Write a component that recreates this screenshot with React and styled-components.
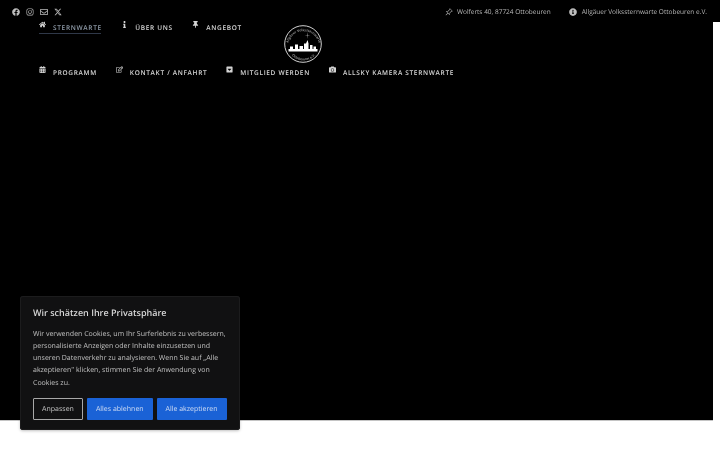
import React from "react";
import styled, { createGlobalStyle } from "styled-components";
import {
  FaHome,
  FaInfo,
  FaThumbtack,
  FaCalendarAlt,
  FaRegEdit,
  FaCamera,
  FaFacebook,
  FaInstagram,
  FaRegEnvelope,
  FaInfoCircle,
  FaCaretSquareDown,
} from "react-icons/fa";
import { FaXTwitter } from "react-icons/fa6";
import { BsPinAngle } from "react-icons/bs";

const GlobalStyle = createGlobalStyle`
  html, body {
    margin: 0;
    padding: 0;
    background: #fff;
    overflow: hidden;
  }
  * {
    box-sizing: border-box;
  }
`;

const Page = styled.div`
  position: relative;
  width: 720px;
  height: 450px;
  font-family: "Open Sans", "Liberation Sans", sans-serif;
  text-rendering: geometricPrecision;
  color: #fff;
  will-change: transform;
`;

const TopBar = styled.header`
  height: 22px;
  background: #000;
  display: flex;
  justify-content: space-between;
  align-items: center;
  padding: 1px 13px 0 12px;
`;

const Socials = styled.div`
  display: flex;
  align-items: center;
  gap: 6px;
  font-size: 8px;
  color: #bdbdbd;
`;

const InfoGroup = styled.div`
  display: flex;
  align-items: center;
  gap: 18.5px;
`;

const InfoItem = styled.span`
  display: flex;
  align-items: center;
  gap: 4.5px;
  font-size: 6.5px;
  color: #b8b8b8;

  svg {
    font-size: 8px;
    color: #bdbdbd;
  }
`;

const Hero = styled.main`
  width: 713px;
  height: 399px;
  background: #000;
  border-bottom: 1px solid #c4c4c4;
  padding: 0 0 0 39px;
`;

const Row = styled.nav`
  display: flex;
  height: 45px;
  gap: ${(props) => props.$gap}px;
`;

const NavEntry = styled.div`
  display: flex;
  flex-direction: column;
`;

const NavItem = styled.a`
  display: flex;
  align-items: flex-start;
  gap: 7px;
  height: 11px;
  font-size: 6.5px;
  font-weight: 600;
  letter-spacing: 0.68px;
  color: ${(props) => (props.$active ? "#8d99a6" : "#d4d4d4")};
  white-space: nowrap;

  svg {
    font-size: 7px;
    color: #d4d4d4;
    margin-top: -1px;
  }
`;

const NavLabel = styled.span`
  line-height: 11px;
`;

const ActiveLine = styled.span`
  display: block;
  width: 62px;
  height: 1px;
  background: #2f3848;
`;

const Logo = styled.svg`
  position: absolute;
  left: 284px;
  top: 25px;
  width: 39px;
  height: 39px;
`;

const LogoLettering = styled.text`
  font-size: 3.4px;
  font-weight: 600;
  fill: #a8a8a8;
  text-anchor: middle;
`;

const CookieBox = styled.section`
  position: absolute;
  left: 20px;
  top: 296px;
  width: 220px;
  height: 134px;
  padding: 10px 13px;
  background: #111112;
  border-radius: 3px;
  box-shadow: inset 0 0 0 1px #1c1c1d, 0 1px 3px rgba(0, 0, 0, 0.25);
`;

const CookieTitle = styled.h2`
  margin: 0 0 9.5px;
  font-size: 9px;
  line-height: 13px;
  font-weight: 600;
  color: #d8d8d8;
`;

const CookieText = styled.p`
  margin: 0 0 8.5px;
  font-size: 7px;
  line-height: 12.3px;
  color: #c0c0c0;
`;

const Buttons = styled.div`
  display: flex;
  gap: 4px;
`;

const Button = styled.button`
  height: 21.5px;
  width: ${(props) => props.$width}px;
  padding: 0;
  font-family: inherit;
  text-rendering: geometricPrecision;
  font-size: 7px;
  border-radius: 1px;
  color: ${(props) => (props.$outline ? "#c4c4c4" : "#cfdcf4")};
  background: ${(props) => (props.$outline ? "#111112" : "#1a62d6")};
  border: ${(props) => (props.$outline ? "1px solid #a8a8a8" : "none")};
`;

const rowOne = [
  { icon: FaHome, label: "STERNWARTE", active: true },
  { icon: FaInfo, label: "ÜBER UNS" },
  { icon: FaThumbtack, label: "ANGEBOT" },
];

const rowTwo = [
  { icon: FaCalendarAlt, label: "PROGRAMM" },
  { icon: FaRegEdit, label: "KONTAKT / ANFAHRT" },
  { icon: FaCaretSquareDown, label: "MITGLIED WERDEN" },
  { icon: FaCamera, label: "ALLSKY KAMERA STERNWARTE" },
];

const NavRow = ({ items, gap }) => (
  <Row $gap={gap}>
    {items.map(({ icon: Icon, label, active }) => (
      <NavEntry key={label}>
        <NavItem $active={active}>
          <Icon />
          <NavLabel>{label}</NavLabel>
        </NavItem>
        {active && <ActiveLine />}
      </NavEntry>
    ))}
  </Row>
);

const App = () => {
  return (
    <Page>
      <GlobalStyle />
      <TopBar>
        <Socials>
          <FaFacebook />
          <FaInstagram />
          <FaRegEnvelope />
          <FaXTwitter />
        </Socials>
        <InfoGroup>
          <InfoItem>
            <BsPinAngle />
            Wolferts 40, 87724 Ottobeuren
          </InfoItem>
          <InfoItem>
            <FaInfoCircle />
            Allgäuer Volkssternwarte Ottobeuren e.V.
          </InfoItem>
        </InfoGroup>
      </TopBar>
      <Hero>
        <NavRow items={rowOne} gap={19.5} />
        <NavRow items={rowTwo} gap={19} />
      </Hero>
      <Logo viewBox="0 0 39 39">
        <defs>
          <path id="logo-top" d="M4 25 A15.800 15.800 0 1 1 35 25" />
          <path id="logo-bottom" d="M6 28 A16 16 0 0 0 33 28" />
        </defs>
        <circle cx="19" cy="19" r="18.3" fill="#000" stroke="#e8e8e8" strokeWidth="0.9" />
        <LogoLettering>
          <textPath href="#logo-top" startOffset="50%">Allgäuer Volkssternwarte</textPath>
        </LogoLettering>
        <LogoLettering>
          <textPath href="#logo-bottom" startOffset="50%">Ottobeuren e.V.</textPath>
        </LogoLettering>
        <path d="M23.500 7 L23.800 10 L26.500 10.300 L23.800 10.600 L23.500 14 L23.200 10.600 L20.500 10.300 L23.200 10 Z" fill="#999" />
        <path
          d="M4.500 26.500 V24 H6 V21.500 H9 V24 H11 V19.500 H14 V24 H15.500 V21 H19 V24 H20 V18.500 H22 L23.500 15 L24.500 18.500 V24 H26 V20 H28.500 V24 H29.500 V21.500 H32 V24 H33.500 V26.500 Z"
          fill="#fff"
        />
      </Logo>
      <CookieBox>
        <CookieTitle>Wir schätzen Ihre Privatsphäre</CookieTitle>
        <CookieText>
          Wir verwenden Cookies, um Ihr Surferlebnis zu verbessern,
          personalisierte Anzeigen oder Inhalte einzusetzen und unseren
          Datenverkehr zu analysieren. Wenn Sie auf „Alle akzeptieren" klicken,
          stimmen Sie der Anwendung von Cookies zu.
        </CookieText>
        <Buttons>
          <Button $outline $width={50}>Anpassen</Button>
          <Button $width={65.5}>Alles ablehnen</Button>
          <Button $width={70}>Alle akzeptieren</Button>
        </Buttons>
      </CookieBox>
    </Page>
  );
};

export default App;
